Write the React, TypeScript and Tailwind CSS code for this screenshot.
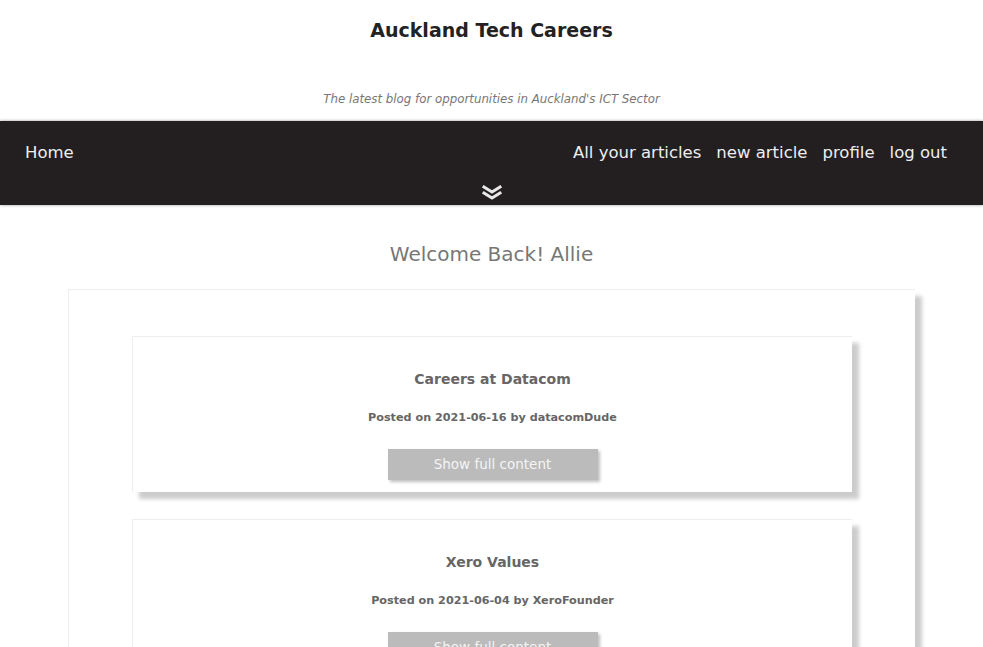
import React from "react";

const posts = [
  { title: "Careers at Datacom", date: "2021-06-16", author: "datacomDude" },
  { title: "Xero Values", date: "2021-06-04", author: "XeroFounder" },
];

function Card({ p }: { p: (typeof posts)[number] }) {
  return (
    <div className="bg-white shadow-[7px_7px_4px_rgba(0,0,0,0.2)] border-t border-l border-[#eee] flex flex-col items-center pt-[32px] pb-[12px]">
      <div className="text-[14px] font-bold text-[#666] leading-[20px]">{p.title}</div>
      <div className="mt-[22px] text-[11.2px] font-bold text-[#666] leading-[14px]">
        Posted on {p.date} by {p.author}
      </div>
      <button className="mt-[24px] w-[210px] h-[31px] bg-[#bbbbbb] text-[#f4f4f4] text-[13.5px] shadow-[2px_2px_3px_rgba(0,0,0,0.25)]">
        Show full content
      </button>
    </div>
  );
}

export default function App() {
  return (
    <div
      className="min-h-[647px] bg-white"
      style={{ fontFamily: '"DejaVu Sans", Verdana, sans-serif' }}
    >
      <header className="flex flex-col items-center">
        <h1 className="mt-[18px] text-[19px] font-bold text-[#222] leading-[24px]">Auckland Tech Careers</h1>
        <p className="mt-[50px] text-[11.8px] italic text-[#777] leading-[14px]">
          The latest blog for opportunities in Auckland's ICT Sector
        </p>
      </header>
      <nav className="mt-[15px] h-[84px] bg-[#231f20] shadow-[0_0_3px_rgba(0,0,0,0.4)] flex flex-col">
        <div className="flex items-center justify-between pl-[25px] pr-[36px] pt-[21px] text-[16.5px] text-[#eeeeee] leading-[22px]">
          <span>Home</span>
          <div className="flex gap-[15px]">
            <span>All your articles</span>
            <span>new article</span>
            <span>profile</span>
            <span>log out</span>
          </div>
        </div>
        <div className="flex justify-center mt-[21px]">
          <svg width="22" height="16" viewBox="0 0 22 16" fill="none" stroke="#e8e8e8" strokeWidth="3" strokeLinecap="square">
            <path d="M3 2 L11 7 L19 2" />
            <path d="M3 8 L11 13 L19 8" />
          </svg>
        </div>
      </nav>
      <h2 className="mt-[35px] text-center text-[20px] text-[#777] leading-[28px]">Welcome Back! Allie</h2>
      <main className="mt-[21px] mx-[68px] bg-white border-t border-l border-[#eee] shadow-[7px_7px_4px_rgba(0,0,0,0.2)] px-[63px] pt-[46px] pb-[30px] flex flex-col gap-[27px] min-h-[400px]">
        {posts.map((p) => (
          <Card key={p.title} p={p} />
        ))}
      </main>
    </div>
  );
}
